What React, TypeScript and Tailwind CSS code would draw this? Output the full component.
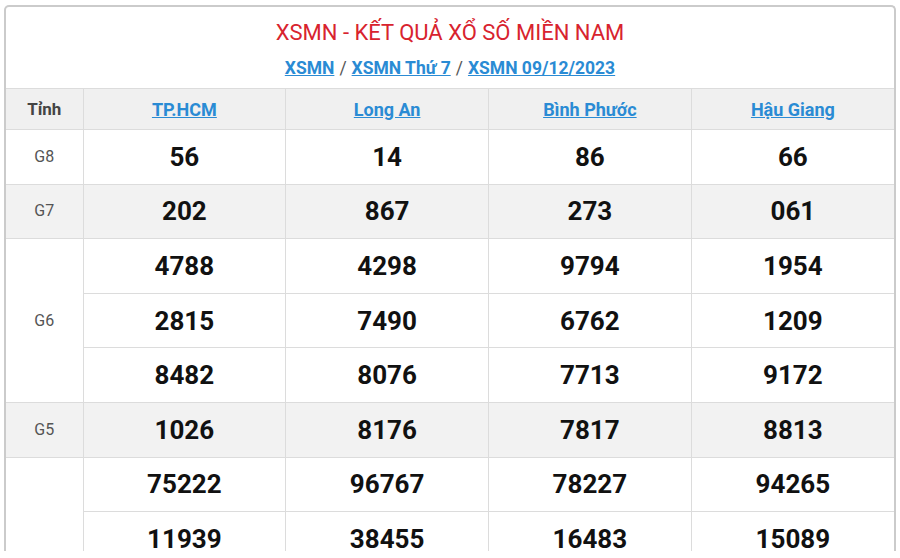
import React from "react";

const provinces = ["TP.HCM", "Long An", "Bình Phước", "Hậu Giang"];

type Row = { label: string; values: string[][]; alt: boolean };

const rows: Row[] = [
  { label: "G8", values: [["56"], ["14"], ["86"], ["66"]], alt: false },
  { label: "G7", values: [["202"], ["867"], ["273"], ["061"]], alt: true },
  {
    label: "G6",
    values: [
      ["4788", "2815", "8482"],
      ["4298", "7490", "8076"],
      ["9794", "6762", "7713"],
      ["1954", "1209", "9172"],
    ],
    alt: false,
  },
  { label: "G5", values: [["1026"], ["8176"], ["7817"], ["8813"]], alt: true },
  {
    label: "G4",
    values: [
      ["75222", "11939"],
      ["96767", "38455"],
      ["78227", "16483"],
      ["94265", "15089"],
    ],
    alt: false,
  },
];

export default function App() {
  const font = { fontFamily: "Roboto, 'Liberation Sans', sans-serif" };
  return (
    <div className="w-[900px] h-[558px] bg-white overflow-hidden" style={font}>
      <div className="pt-[5px] pl-[4px]">
        <div className="w-[892px] h-[546px] overflow-hidden border-2 border-b-0 border-[#cbcbcb] rounded-t-[5px] bg-white">
          <div className="h-[81px] flex flex-col items-center">
            <div className="mt-[12px] text-[22px] leading-[28px] text-[#d8232e]">
              XSMN - KẾT QUẢ XỔ SỐ MIỀN NAM
            </div>
            <div className="mt-[10px] text-[17.5px] leading-[22px] font-bold text-[#555]">
              <a className="text-[#2a8bd4] underline">XSMN</a>
              <span className="font-normal mx-[5px]">/</span>
              <a className="text-[#2a8bd4] underline">XSMN Thứ 7</a>
              <span className="font-normal mx-[5px]">/</span>
              <a className="text-[#2a8bd4] underline">XSMN 09/12/2023</a>
            </div>
          </div>
          <table className="w-full table-fixed border-collapse">
            <colgroup>
              <col className="w-[77px]" />
              <col />
              <col />
              <col />
              <col />
            </colgroup>
            <thead>
              <tr className="h-[41px] bg-[#f0f0f0]">
                <th className="border border-l-0 border-[#dcdcdc] pt-[2px] text-[17px] font-bold text-[#444]">Tỉnh</th>
                {provinces.map((p, i) => (
                  <th
                    key={p}
                    className={`border border-[#dcdcdc] pt-[1px] text-[18px] font-bold ${i === 3 ? "border-r-0" : ""}`}
                  >
                    <a className="text-[#2a8bd4] underline">{p}</a>
                  </th>
                ))}
              </tr>
            </thead>
            <tbody>
              {rows.map((row) => {
                const n = row.values[0].length;
                return Array.from({ length: n }).map((_, k) => (
                  <tr key={row.label + k} className={`h-[54.6px] ${row.alt ? "bg-[#f2f2f2]" : "bg-white"}`}>
                    {k === 0 && (
                      <td
                        rowSpan={n}
                        className="border border-l-0 border-[#dcdcdc] text-center text-[16px] text-[#555] bg-inherit"
                      >
                        {row.label === "G4" ? "" : row.label}
                      </td>
                    )}
                    {row.values.map((v, i) => (
                      <td
                        key={i}
                        className={`border border-[#dcdcdc] pt-[1px] text-center text-[26px] font-bold text-[#111] ${i === 3 ? "border-r-0" : ""}`}
                      >
                        {v[k]}
                      </td>
                    ))}
                  </tr>
                ));
              })}
            </tbody>
          </table>
        </div>
      </div>
    </div>
  );
}
